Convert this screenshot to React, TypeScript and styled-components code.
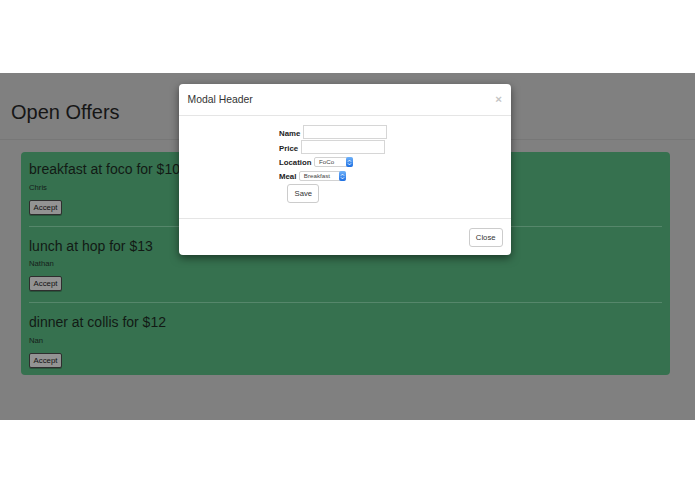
import React from 'react';
import styled, { createGlobalStyle } from 'styled-components';

const GlobalStyle = createGlobalStyle`
  html, body {
    margin: 0;
    padding: 0;
    background: #fff;
    font-family: 'Liberation Sans', Arial, Helvetica, sans-serif;
  }
`;

type Offer = { title: string; name: string };

const offers: Offer[] = [
  { title: 'breakfast at foco for $10', name: 'Chris' },
  { title: 'lunch at hop for $13', name: 'Nathan' },
  { title: 'dinner at collis for $12', name: 'Nan' },
];

const ArrowBox = () => (
  <SelectArrow>
    <svg width="5" height="7" viewBox="0 0 5 7">
      <path d="M1 2.6 L2.5 1.1 L4 2.6" stroke="#fff" strokeWidth="0.9" fill="none" />
      <path d="M1 4.4 L2.5 5.9 L4 4.4" stroke="#fff" strokeWidth="0.9" fill="none" />
    </svg>
  </SelectArrow>
);

const App: React.FC = () => {
  return (
    <>
      <GlobalStyle />
      <Frame>
        <TopBand />
        <Screen>
          <PageHeader>
            <Heading>Open Offers</Heading>
          </PageHeader>
          <OfferCard>
            {offers.map((o, i) => (
              <React.Fragment key={o.title}>
                {i > 0 && <Divider />}
                <OfferItem>
                  <OfferTitle>{o.title}</OfferTitle>
                  <OfferName>{o.name}</OfferName>
                  <AcceptButton>Accept</AcceptButton>
                </OfferItem>
              </React.Fragment>
            ))}
          </OfferCard>

          {/* modal layer */}
          <Backdrop>
            <Modal>
              <ModalHeader>
                <ModalTitle>Modal Header</ModalTitle>
                <CloseX>×</CloseX>
              </ModalHeader>
              <ModalBody>
                <Field $gap={1} $h={14}>
                  <Label $nudge={3}>Name</Label>
                  <TextInput type="text" />
                </Field>
                <Field $gap={1} $h={14}>
                  <Label $nudge={3}>Price</Label>
                  <TextInput type="text" />
                </Field>
                <Field $gap={3} $h={10}>
                  <Label>Location</Label>
                  <SelectWrap $w={39}>
                    <SelectText>FoCo</SelectText>
                    <ArrowBox />
                  </SelectWrap>
                </Field>
                <Field $gap={4} $h={10}>
                  <Label>Meal</Label>
                  <SelectWrap $w={47}>
                    <SelectText>Breakfast</SelectText>
                    <ArrowBox />
                  </SelectWrap>
                </Field>
                <SaveButton>Save</SaveButton>
              </ModalBody>
              <ModalFooter>
                <PlainButton>Close</PlainButton>
              </ModalFooter>
            </Modal>
          </Backdrop>
        </Screen>
      </Frame>
    </>
  );
};

export default App;

// 전체 프레임
const Frame = styled.div`
  width: 695px;
  height: 494px;
  display: flex;
  flex-direction: column;
  background: #fff;
`;

const TopBand = styled.div`
  height: 73px;
  flex: none;
`;

// 어두워진 페이지 영역
const Screen = styled.div`
  position: relative;
  height: 347px;
  flex: none;
  background: #808080;
  overflow: hidden;
`;

const PageHeader = styled.div`
  height: 66px;
  border-bottom: 1px solid #777;
  padding-left: 11px;
  box-sizing: content-box;
`;

const Heading = styled.h1`
  margin: 0;
  padding-top: 27px;
  font-size: 20px;
  line-height: 24px;
  font-weight: 300;
  color: #161616;
`;

const OfferCard = styled.div`
  margin: 12px 25px 0 21px;
  padding: 9px 8px 7px;
  background: #36714f;
  border-radius: 4px;
`;

const OfferItem = styled.div`
  display: flex;
  flex-direction: column;
  align-items: flex-start;
`;

const OfferTitle = styled.div`
  font-size: 14px;
  line-height: 17px;
  color: #121a15;
`;

const OfferName = styled.div`
  margin-top: 4.5px;
  font-size: 7.7px;
  line-height: 10px;
  color: #15201a;
`;

const AcceptButton = styled.button`
  margin-top: 7px;
  width: 33px;
  height: 15px;
  padding: 0;
  font-family: inherit;
  font-size: 7.8px;
  color: #111;
  background: #939393;
  border: 1px solid #2e2e2e;
  border-radius: 2px;
  box-shadow: 0 1px 0 rgba(0, 0, 0, 0.25);
`;

const Divider = styled.div`
  height: 1px;
  margin: 11px 0;
  background: rgba(255, 255, 255, 0.16);
`;

const Backdrop = styled.div`
  position: absolute;
  inset: 0;
  display: flex;
  justify-content: center;
  align-items: flex-start;
  padding: 11px 5px 0 0;
`;

const Modal = styled.div`
  width: 332px;
  background: #fff;
  border-radius: 4px;
  box-shadow: 0 3px 9px rgba(0, 0, 0, 0.5);
  display: flex;
  flex-direction: column;
`;

const ModalHeader = styled.div`
  height: 31px;
  padding: 0 9px 0 8.5px;
  border-bottom: 1px solid #e5e5e5;
  display: flex;
  align-items: center;
  justify-content: space-between;
`;

const ModalTitle = styled.div`
  font-size: 10.4px;
  color: #333;
`;

const CloseX = styled.span`
  font-size: 11.5px;
  font-weight: bold;
  color: #c4c4c4;
  margin-top: -2px;
`;

const ModalBody = styled.div`
  padding: 9px 0 15px 100px;
  display: flex;
  flex-direction: column;
  align-items: flex-start;
`;

const Field = styled.div<{ $gap: number; $h: number }>`
  margin-top: ${(p) => p.$gap}px;
  height: ${(p) => p.$h}px;
  display: flex;
  align-items: center;
  gap: 2.5px;
  &:first-child {
    margin-top: 0;
  }
`;

const Label = styled.label<{ $nudge?: number }>`
  font-size: 7.8px;
  font-weight: bold;
  color: #222;
  padding-top: ${(p) => p.$nudge || 0}px;
`;

const TextInput = styled.input`
  width: 84px;
  height: 14px;
  box-sizing: border-box;
  border: 1px solid #d6d6d6;
  padding: 0 2px;
  font-size: 8px;
  outline: none;
`;

const SelectWrap = styled.div<{ $w: number }>`
  width: ${(p) => p.$w}px;
  height: 10px;
  box-sizing: border-box;
  border: 1px solid #d2d2d2;
  border-radius: 2px;
  display: flex;
  align-items: stretch;
  justify-content: space-between;
  background: #fff;
`;

const SelectText = styled.span`
  font-size: 6.2px;
  line-height: 8px;
  color: #444;
  padding-left: 4px;
`;

const SelectArrow = styled.span`
  width: 7px;
  margin: -1px -1px -1px 0;
  border-radius: 2px;
  background: linear-gradient(#6fb2fa, #1d6fe3);
  display: flex;
  align-items: center;
  justify-content: center;
`;

const PlainButton = styled.button`
  height: 19px;
  padding: 0 6px;
  font-family: inherit;
  font-size: 7.7px;
  color: #333;
  background: #fff;
  border: 1px solid #ccc;
  border-radius: 3px;
`;

const SaveButton = styled(PlainButton)`
  margin: 2.5px 0 0 8.3px;
  width: 32px;
`;

const ModalFooter = styled.div`
  border-top: 1px solid #e5e5e5;
  padding: 9px 8.5px 8px;
  display: flex;
  justify-content: flex-end;
`;
